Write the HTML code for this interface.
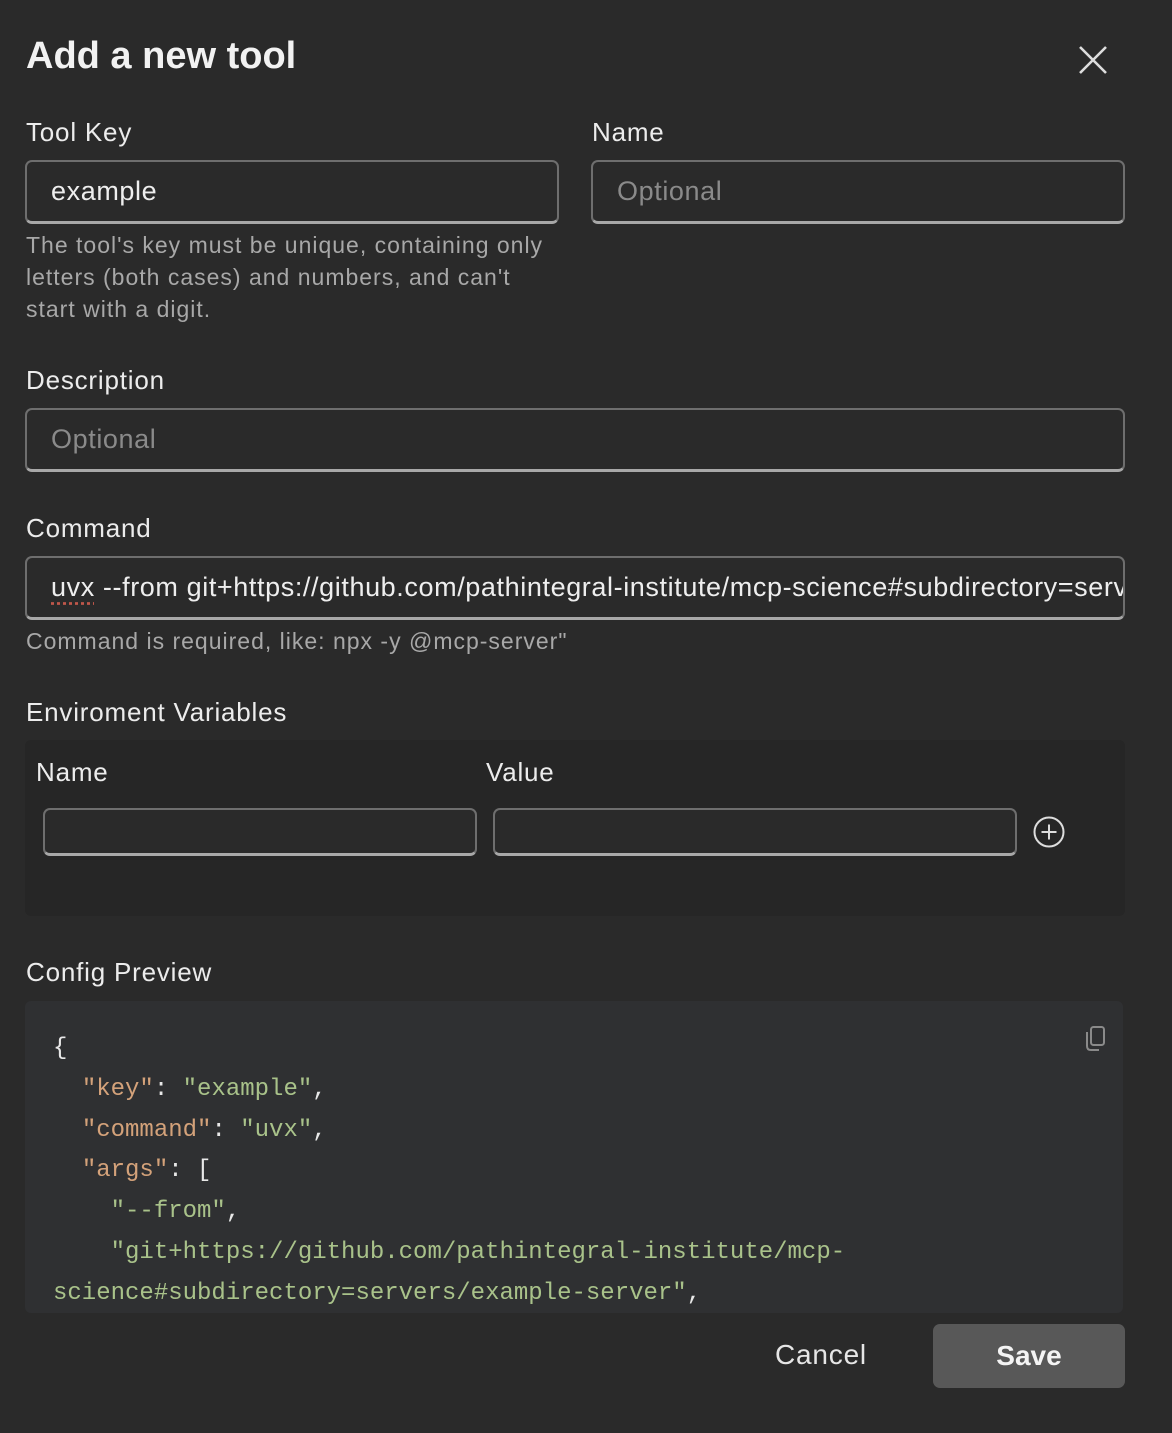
<!DOCTYPE html>
<html><head><style>
*{box-sizing:border-box;margin:0;padding:0}
body{width:1172px;height:1433px;background:#2a2a2a;font-family:"Liberation Sans",sans-serif;color:#eee;position:relative;overflow:hidden}
.a{position:absolute}
.lbl{font-size:26px;color:#ececec;letter-spacing:0.8px}
.inp{position:absolute;border:2px solid #6e6e6e;border-bottom:3px solid #a8a8a8;border-radius:7px;background:#2a2a2a;font-size:27px;letter-spacing:0.6px;padding-left:24px;display:flex;align-items:center;white-space:nowrap;overflow:hidden}
.ph{color:#8a8a8a}
.help{font-size:23px;color:#a8a8a8;line-height:32px;letter-spacing:1px}
.code{font-family:"Liberation Mono",monospace;font-size:24px;line-height:40.8px;color:#e8e8e8;white-space:pre}
.k{color:#d4a27a}.s{color:#a9c28a}
</style></head><body>
<div class="a" style="left:26px;top:35px;font-size:38px;font-weight:bold;color:#f2f2f2">Add a new tool</div>
<svg class="a" style="left:1078px;top:45px" width="30" height="30" viewBox="0 0 30 30"><path d="M2 2L28 28M28 2L2 28" stroke="#ddd" stroke-width="2.6"/></svg>

<div class="a lbl" style="left:26px;top:117px">Tool Key</div>
<div class="a lbl" style="left:592px;top:117px">Name</div>
<div class="inp" style="left:25px;top:160px;width:534px;height:64px">example</div>
<div class="inp ph" style="left:591px;top:160px;width:534px;height:64px">Optional</div>
<div class="a help" style="left:26px;top:229px;width:530px">The tool's key must be unique, containing only letters (both cases) and numbers, and can't start with a digit.</div>

<div class="a lbl" style="left:26px;top:365px">Description</div>
<div class="inp ph" style="left:25px;top:408px;width:1100px;height:64px">Optional</div>

<div class="a lbl" style="left:26px;top:513px">Command</div>
<div class="inp" style="left:25px;top:556px;width:1100px;height:64px;padding-right:24px"><span><span style="text-decoration:underline dotted #c0574a;text-underline-offset:6px">uvx</span> --from git+https://github.com/pathintegral-institute/mcp-science#subdirectory=servers/example-server</span></div>
<div class="a help" style="left:26px;top:625px">Command is required, like: npx -y @mcp-server"</div>

<div class="a lbl" style="left:26px;top:697px">Enviroment Variables</div>
<div class="a" style="left:25px;top:740px;width:1100px;height:176px;background:#262626;border-radius:6px"></div>
<div class="a lbl" style="left:36px;top:757px">Name</div>
<div class="a lbl" style="left:486px;top:757px">Value</div>
<div class="inp" style="left:43px;top:808px;width:434px;height:48px"></div>
<div class="inp" style="left:493px;top:808px;width:524px;height:48px"></div>
<svg class="a" style="left:1033px;top:816px" width="32" height="32" viewBox="0 0 32 32"><circle cx="16" cy="16" r="14.5" fill="none" stroke="#ddd" stroke-width="2"/><path d="M16 8.5V23.5M8.5 16H23.5" stroke="#ddd" stroke-width="2"/></svg>

<div class="a lbl" style="left:26px;top:957px">Config Preview</div>
<div class="a" style="left:25px;top:1001px;width:1098px;height:312px;background:#2f3032;border-radius:6px;overflow:hidden">
<svg class="a" style="left:1059px;top:24px" width="24" height="28" viewBox="0 0 24 28"><rect x="7" y="2" width="13" height="18" rx="2.5" fill="none" stroke="#8a8a8a" stroke-width="2"/><path d="M3 7V21Q3 25 7 25H15" fill="none" stroke="#8a8a8a" stroke-width="2"/></svg>
<div class="a code" style="left:28px;top:28px">{
  <span class="k">"key"</span>: <span class="s">"example"</span>,
  <span class="k">"command"</span>: <span class="s">"uvx"</span>,
  <span class="k">"args"</span>: [
    <span class="s">"--from"</span>,
    <span class="s">"git+https://github.com/pathintegral-institute/mcp-</span>
<span class="s">science#subdirectory=servers/example-server"</span>,</div>
</div>

<div class="a" style="left:775px;top:1339px;font-size:28px;color:#e6e6e6;letter-spacing:0.8px">Cancel</div>
<div class="a" style="left:933px;top:1324px;width:192px;height:64px;background:#585858;border-radius:7px;display:flex;align-items:center;justify-content:center;font-size:28px;font-weight:bold;color:#f4f4f4">Save</div>
</body></html>
